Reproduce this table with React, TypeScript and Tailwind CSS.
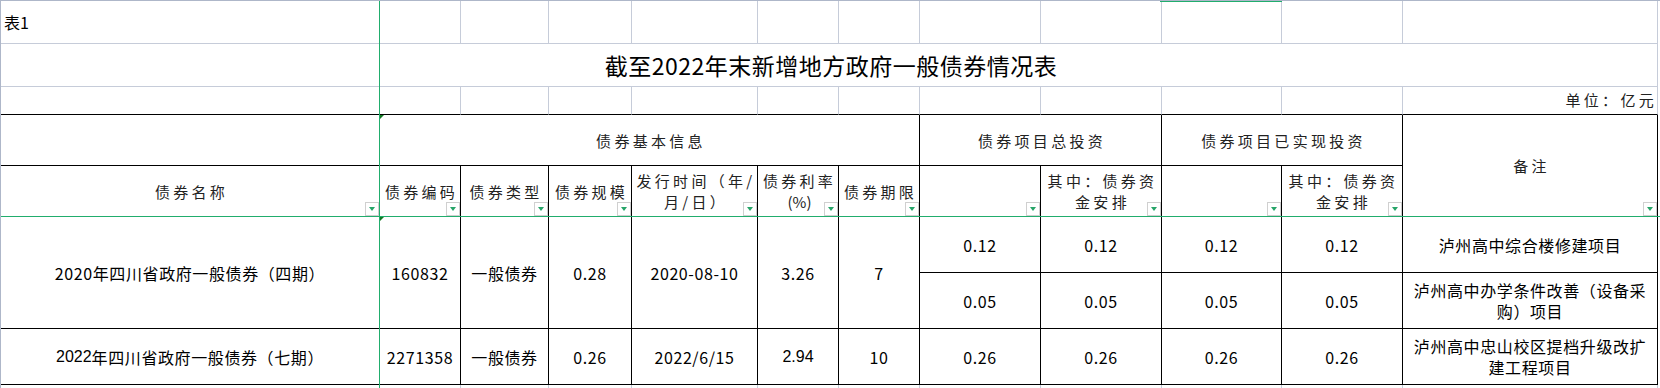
import React from 'react';

// light sheet gridlines, black table borders
const g = 'border-r border-b border-r-[#c6ccd9] border-b-[#c6ccd9]';
const gb = 'border-r border-b border-r-[#c6ccd9] border-b-black';
const t = 'relative border-r border-b border-black';
const mid = 'flex items-center justify-center text-center';
const hd = 'text-[15px] tracking-[3.3px] text-[#222]';
const dt = 'text-[16px] tracking-[0.6px] text-black';

function Filter() {
  return (
    <span className="absolute right-0 bottom-0 flex h-[14px] w-[14px] items-center justify-center border border-[#d0d0d0] bg-white">
      <span className="h-0 w-0 border-x-[3.5px] border-t-[4px] border-x-transparent border-t-[#27a468]" />
    </span>
  );
}

function Mark() {
  return <span className="absolute left-0 top-0 h-0 w-0 border-t-[4px] border-r-[4px] border-t-[#137a25] border-r-transparent" />;
}

function Head({ children, filter = true, className = '' }: { children?: React.ReactNode; filter?: boolean; className?: string }) {
  return (
    <div className={`${t} ${mid} ${hd} leading-[21px] ${className}`}>
      <span className="pl-[3px]">{children}</span>
      {filter && <Filter />}
    </div>
  );
}

function Val({ children, className = '', mark = false }: { children?: React.ReactNode; className?: string; mark?: boolean }) {
  return (
    <div className={`${t} ${mid} ${dt} ${className}`}>
      {mark && <Mark />}
      {children}
    </div>
  );
}

export default function App() {
  const blank = Array.from({ length: 11 });

  return (
    <div className="relative h-[388px] w-[1660px] overflow-hidden border-l border-t border-[#aeb7c9] bg-white font-['Noto_Sans_CJK_SC',sans-serif] text-black">
      <div className="grid h-full grid-cols-[379px_81px_88px_83px_126px_81px_81px_121px_121px_120px_121px_255px_1fr] grid-rows-[43px_43px_28px_51px_51px_56px_56px_56px_1fr]">
        {/* row 1 */}
        <div className={`${g} flex items-center pl-[3px] text-[16px]`}>表1</div>
        {blank.map((_, i) => (
          <div key={`a${i}`} className={g} />
        ))}
        <div />

        {/* title row */}
        <div className={g} />
        <div className="col-span-9 flex items-center justify-center border-b border-b-[#c6ccd9] text-[23px] font-normal tracking-[0.5px] text-black">
          截至2022年末新增地方政府一般债券情况表
        </div>
        <div className={`${g} col-span-2`} />
        <div />

        {/* unit row */}
        {blank.map((_, i) => (
          <div key={`u${i}`} className={gb} />
        ))}
        <div className={`${gb} flex items-center justify-end ${hd}`}>单位：亿元</div>
        <div />

        {/* header row A */}
        <div className={t} />
        <Head filter={false} className="col-span-6">
          <Mark />
          债券基本信息
        </Head>
        <Head filter={false} className="col-span-2">债券项目总投资</Head>
        <Head filter={false} className="col-span-2">债券项目已实现投资</Head>
        <Head className="row-span-2">备注</Head>
        <div />

        {/* header row B */}
        <Head>债券名称</Head>
        <Head>债券编码</Head>
        <Head>债券类型</Head>
        <Head>债券规模</Head>
        <Head>
          发行时间（年/
          <br />
          月/日）
        </Head>
        <Head>
          债券利率
          <br />
          <span className="tracking-normal">(%)</span>
        </Head>
        <Head>债券期限</Head>
        <Head />
        <Head>
          其中：债券资
          <br />
          金安排
        </Head>
        <Head />
        <Head>
          其中：债券资
          <br />
          金安排
        </Head>
        <div />

        {/* data row 1 */}
        <Val className="row-span-2">2020年四川省政府一般债券（四期）</Val>
        <Val className="row-span-2" mark>160832</Val>
        <Val className="row-span-2">一般债券</Val>
        <Val className="row-span-2">0.28</Val>
        <Val className="row-span-2">2020-08-10</Val>
        <Val className="row-span-2">3.26</Val>
        <Val className="row-span-2">7</Val>
        <Val>0.12</Val>
        <Val>0.12</Val>
        <Val>0.12</Val>
        <Val>0.12</Val>
        <Val>泸州高中综合楼修建项目</Val>
        <div />
        <Val>0.05</Val>
        <Val>0.05</Val>
        <Val>0.05</Val>
        <Val>0.05</Val>
        <Val className="leading-[21px]">
          泸州高中办学条件改善（设备采
          <br />
          购）项目
        </Val>
        <div />

        {/* data row 2 */}
        <Val>
          <span className="font-['Liberation_Sans',sans-serif] tracking-normal">2022</span>年四川省政府一般债券（七期）
        </Val>
        <Val>2271358</Val>
        <Val>一般债券</Val>
        <Val>0.26</Val>
        <Val>2022/6/15</Val>
        <Val>
          <span className="font-['Liberation_Sans',sans-serif] tracking-normal">2.94</span>
        </Val>
        <Val>10</Val>
        <Val>0.26</Val>
        <Val>0.26</Val>
        <Val>0.26</Val>
        <Val>0.26</Val>
        <Val className="leading-[21px]">
          泸州高中忠山校区提档升级改扩
          <br />
          建工程项目
        </Val>
        <div />

        {/* trailing gridlines */}
        {Array.from({ length: 12 }).map((_, i) => (
          <div key={`z${i}`} className="border-r border-r-[#c6ccd9]" />
        ))}
        <div />
      </div>

      {/* frozen pane lines and the selected column marker */}
      <div className="absolute top-0 bottom-0 left-[378px] w-px bg-[#21ad6d]" />
      <div className="absolute left-0 right-0 top-[215px] h-px bg-[#21ad6d]" />
      <div className="absolute -top-px left-[1159px] h-[2px] w-[122px] bg-[#21ad6d]" />
    </div>
  );
}
